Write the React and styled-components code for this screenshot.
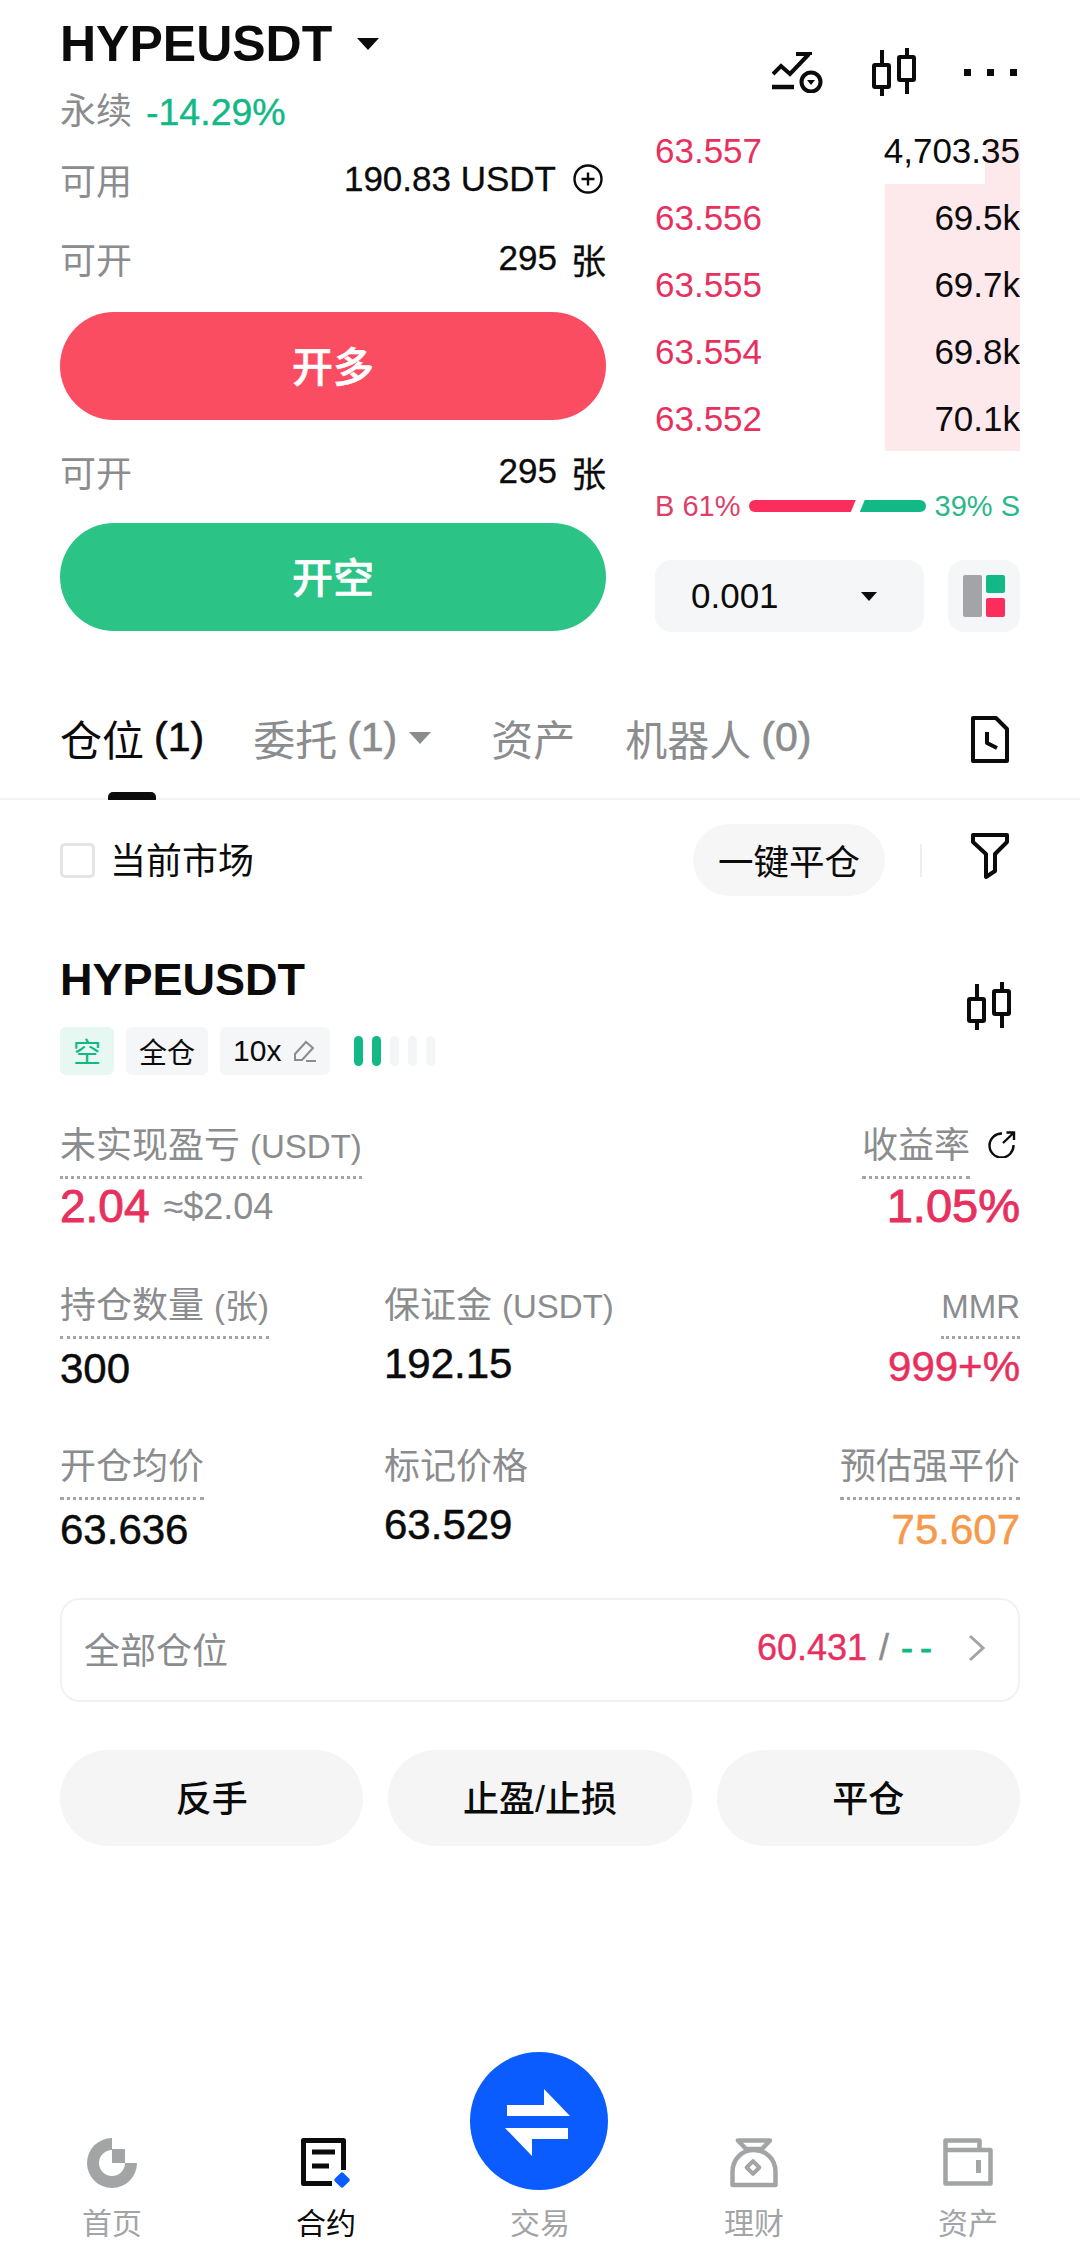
import React from 'react'
import styled, { createGlobalStyle } from 'styled-components'

const RED = '#e8305e'
const GREEN = '#12b886'
const GREY = '#8a8c8e'
const INK = '#0b0b0b'

const GlobalStyle = createGlobalStyle`
    html, body {
        margin: 0;
        background: #fff;
    }
    * {
        box-sizing: border-box;
    }
    body {
        font-family: "Liberation Sans", "Noto Sans CJK SC", sans-serif;
        color: ${INK};
    }
`

const Page = styled.div`
    width: 1080px;
    height: 2248px;
    overflow: hidden;
    display: flex;
    flex-direction: column;
    position: relative;
    background: #fff;
`

const Header = styled.header`
    height: 137px;
    padding: 18px 63px 0 60px;
    display: flex;
    justify-content: space-between;
    flex-shrink: 0;
`

const Symbol = styled.div`
    display: flex;
    align-items: center;
    height: 52px;
    font-size: 50px;
    font-weight: 700;
    gap: 25px;
`

const Caret = styled.i`
    display: block;
    width: 0;
    height: 0;
    border-left: ${p => p.$size}px solid transparent;
    border-right: ${p => p.$size}px solid transparent;
    border-top: ${p => p.$size * 1.15}px solid ${p => p.$color || INK};
`

const SubLine = styled.div`
    display: flex;
    align-items: center;
    gap: 14px;
    margin-top: 17px;
    font-size: 36px;
    line-height: 50px;
    color: ${GREY};
`

const Change = styled.span`
    font-size: 37.5px;
    color: ${GREEN};
    -webkit-text-stroke: 0.4px ${GREEN};
`

const HeaderIcons = styled.div`
    display: flex;
    align-items: center;
    gap: 48px;
    height: 108px;
`

const Dots = styled.div`
    display: flex;
    gap: 16px;
    i {
        display: block;
        width: 7px;
        height: 7px;
        background: ${INK};
    }
`

const Trade = styled.section`
    height: 543px;
    flex-shrink: 0;
    padding: 0 60px;
    display: flex;
    gap: 49px;
`

const Form = styled.div`
    width: 546px;
`

const FormRow = styled.div`
    display: flex;
    justify-content: space-between;
    align-items: center;
    height: 60px;
    margin-top: ${p => p.$top}px;
    padding-bottom: 4px;
    font-size: 35px;
    -webkit-text-stroke: 0.3px ${INK};
`

const FormLabel = styled.span`
    font-size: 36px;
    color: ${GREY};
    -webkit-text-stroke: 0;
`

const FormValue = styled.span`
    display: flex;
    align-items: center;
    gap: ${p => p.$gap}px;
    padding-right: ${p => p.$end || 0}px;
`

const BigButton = styled.button`
    display: block;
    width: 100%;
    height: 108px;
    margin-top: ${p => p.$top}px;
    padding: 0 0 5px;
    border: 0;
    border-radius: 54px;
    background: ${p => p.$color};
    color: #fff;
    font-family: inherit;
    font-size: 41px;
    font-weight: 500;
    -webkit-text-stroke: 0.6px #fff;
`

const Side = styled.div`
    width: 365px;
`

const Book = styled.div`
    height: 314px;
    overflow: hidden;
`

const BookRows = styled.div`
    margin-top: -20px;
`

const BookRow = styled.div`
    position: relative;
    display: flex;
    justify-content: space-between;
    align-items: center;
    height: 67px;
    font-size: 35px;
`

const Depth = styled.div`
    position: absolute;
    top: ${p => p.$top}px;
    right: 0;
    bottom: 0;
    width: ${p => p.$width}px;
    background: #fde8ec;
`

const BookPrice = styled.span`
    position: relative;
    color: ${RED};
`

const BookSize = styled.span`
    position: relative;
`

const Ratio = styled.div`
    display: flex;
    align-items: center;
    justify-content: space-between;
    height: 40px;
    margin-top: 35px;
    font-size: 29px;
`

const RatioText = styled.span`
    color: ${p => p.$color};
    white-space: nowrap;
`

const RatioBars = styled.div`
    display: flex;
    gap: 4px;
    width: 177px;
`

const BuyBar = styled.div`
    height: 12px;
    flex: 108;
    background: #fb2d5c;
    border-radius: 6px 0 0 6px;
    clip-path: polygon(0 0, 100% 0, calc(100% - 5px) 100%, 0 100%);
`

const SellBar = styled.div`
    height: 12px;
    flex: 67;
    background: ${GREEN};
    border-radius: 0 6px 6px 0;
    clip-path: polygon(5px 0, 100% 0, 100% 100%, 0 100%);
`

const Controls = styled.div`
    display: flex;
    gap: 24px;
    margin-top: 34px;
`

const Select = styled.div`
    display: flex;
    align-items: center;
    justify-content: space-between;
    width: 269px;
    height: 72px;
    padding: 0 47px 0 36px;
    border-radius: 16px;
    background: #f4f6f8;
    font-size: 35px;
`

const LayoutButton = styled.div`
    display: grid;
    grid-template-columns: 19px 19px;
    grid-template-rows: 18px 19px;
    gap: 5px 4px;
    align-content: center;
    justify-content: center;
    width: 72px;
    height: 72px;
    border-radius: 16px;
    background: #f4f6f8;
`

const LayoutCell = styled.i`
    display: block;
    border-radius: 2px;
    background: ${p => p.$color};
    grid-row: ${p => (p.$tall ? '1 / 3' : 'auto')};
`

const Tabs = styled.nav`
    height: 120px;
    flex-shrink: 0;
    padding: 0 71px 0 60px;
    display: flex;
    align-items: center;
    border-bottom: 2px solid #f3f3f3;
`

const Tab = styled.div`
    position: relative;
    display: flex;
    align-items: center;
    height: 100%;
    margin-right: ${p => p.$gap}px;
    padding-bottom: 4px;
    font-size: 42px;
    color: ${p => (p.$active ? INK : GREY)};
    white-space: nowrap;
`

const TabCount = styled.span`
    font-size: 41px;
    margin-left: 10px;
    -webkit-text-stroke: 0.6px currentColor;
`

const TabCaret = styled.span`
    margin-left: 12px;
    margin-top: 2px;
`

const TabMark = styled.i`
    position: absolute;
    left: 48px;
    bottom: -2px;
    width: 48px;
    height: 8px;
    border-radius: 5px 5px 0 0;
    background: ${INK};
`

const TabIcon = styled.div`
    margin-left: auto;
    display: flex;
`

const FilterRow = styled.div`
    height: 120px;
    flex-shrink: 0;
    padding: 0 71px 0 60px;
    display: flex;
    align-items: center;
`

const Check = styled.i`
    display: block;
    width: 35px;
    height: 35px;
    border: 3px solid #e2e4e5;
    border-radius: 5px;
    margin-right: 15px;
`

const MarketLabel = styled.span`
    font-size: 36px;
    padding-bottom: 4px;
`

const CloseAll = styled.div`
    display: flex;
    align-items: center;
    justify-content: center;
    width: 192px;
    height: 72px;
    margin-left: auto;
    padding-bottom: 2px;
    border-radius: 36px;
    background: #f6f6f6;
    font-size: 35.5px;
`

const Rule = styled.i`
    display: block;
    width: 2px;
    height: 33px;
    margin: 0 49px 0 35px;
    background: #eeeeee;
`

const FunnelBox = styled.div`
    display: flex;
    margin-bottom: 8px;
`

const Position = styled.section`
    padding: 30px 60px 0;
    flex-shrink: 0;
`

const PositionHead = styled.div`
    display: flex;
    justify-content: space-between;
    align-items: center;
`

const HeadIcon = styled.div`
    display: flex;
    margin: 0 9px 12px 0;
`

const PositionName = styled.h2`
    margin: 0;
    height: 60px;
    line-height: 60px;
    font-size: 45px;
    font-weight: 700;
`

const TagRow = styled.div`
    display: flex;
    align-items: center;
    gap: 12px;
    margin-top: 17px;
`

const Tag = styled.span`
    display: flex;
    align-items: center;
    gap: 12px;
    height: 48px;
    padding: 0 13px;
    border-radius: 6px;
    font-size: ${p => p.$size || 28}px;
    background: ${p => (p.$green ? '#e6f8f1' : '#f4f6f8')};
    color: ${p => (p.$green ? GREEN : INK)};
`

const Risk = styled.div`
    display: flex;
    gap: 9px;
    margin-left: 12px;
`

const RiskBar = styled.i`
    display: block;
    width: 9px;
    height: 30px;
    border-radius: 5px;
    background: ${p => (p.$on ? GREEN : '#f4f5f6')};
`

const Metrics = styled.div`
    display: grid;
    grid-template-columns: ${p => p.$columns || '324px 1fr auto'};
    margin-top: ${p => p.$top}px;
`

const Metric = styled.div`
    display: flex;
    flex-direction: column;
    align-items: ${p => (p.$right ? 'flex-end' : 'flex-start')};
`

const LabelLine = styled.div`
    display: flex;
    align-items: flex-start;
    gap: 18px;
    padding-right: 4px;
`

const ShareBox = styled.div`
    display: flex;
    margin-top: 6px;
`

const Label = styled.span`
    display: block;
    height: 55px;
    line-height: 44px;
    padding-bottom: 8px;
    border-bottom: 3px ${p => (p.$plain ? 'solid transparent' : 'dotted #a3a5a7')};
    font-size: 36px;
    color: ${GREY};
    white-space: nowrap;
`

const LabelUnit = styled.span`
    font-size: 33px;
`

const Value = styled.div`
    height: 50px;
    line-height: 50px;
    margin-top: ${p => p.$top}px;
    font-size: ${p => p.$size || 42}px;
    color: ${p => p.$color || INK};
    -webkit-text-stroke: ${p => (p.$size ? 0.9 : 0.5)}px ${p => p.$color || INK};
    white-space: nowrap;
`

const ValueLine = styled.div`
    display: flex;
    align-items: center;
    gap: 14px;
`

const Approx = styled.span`
    margin-top: 3px;
    font-size: 36px;
    color: ${GREY};
`

const Total = styled.div`
    display: flex;
    align-items: center;
    height: 104px;
    margin-top: 43px;
    padding: 0 32px 4px 22px;
    border: 2px solid #f1f2f3;
    border-radius: 20px;
    font-size: 36px;
    color: ${GREY};
`

const TotalValue = styled.span`
    margin-left: auto;
    margin-right: 29px;
    font-size: 36px;
    color: ${RED};
    -webkit-text-stroke: 0.4px ${RED};
`

const Slash = styled.span`
    color: ${GREY};
    margin: 0 12px;
    -webkit-text-stroke: 0.4px ${GREY};
`

const Dash = styled.span`
    color: ${GREEN};
    letter-spacing: 7px;
    -webkit-text-stroke: 0.8px ${GREEN};
`

const Actions = styled.div`
    display: flex;
    gap: 25px;
    margin-top: 48px;
`

const Action = styled.button`
    flex: 1;
    height: 96px;
    padding: 0 0 5px;
    border: 0;
    border-radius: 48px;
    background: #f5f5f5;
    color: ${INK};
    font-family: inherit;
    font-size: 36px;
    font-weight: 500;
`

const TabBar = styled.footer`
    margin-top: auto;
    height: 110px;
    padding: 0 5px;
    display: grid;
    grid-template-columns: repeat(5, 1fr);
`

const TabItem = styled.div`
    display: flex;
    flex-direction: column;
    align-items: center;
    font-size: 30px;
    color: ${p => (p.$active ? INK : '#a2a4a6')};
`

const TabGlyph = styled.div`
    height: 54px;
    display: flex;
    align-items: flex-start;
`

const TabText = styled.span`
    margin-top: 12px;
    line-height: 40px;
`

const SwapButton = styled.div`
    position: absolute;
    left: 470px;
    top: 2052px;
    width: 138px;
    height: 138px;
    border-radius: 50%;
    background: #0a5cff;
    display: flex;
    align-items: center;
    justify-content: center;
`

const ChartIcon = () => (
    <svg width="52" height="42" viewBox="0 0 52 42" fill="none" stroke={INK} strokeWidth="4">
        <path d="M1 23L9 15L18 23L37 3M24 3H38V4" />
        <path d="M0 36H22" strokeWidth="4.5" />
        <circle cx="39" cy="31" r="9.5" />
        <path d="M35 29H43L39 34Z" fill={INK} stroke="none" />
    </svg>
)

const CandleIcon = () => (
    <svg width="44" height="49" viewBox="0 0 44 49" fill="none" stroke={INK} strokeWidth="4" strokeLinejoin="round">
        <rect x="2" y="17" width="15" height="22" rx="1" />
        <path d="M10 2V17M10 39V48" />
        <rect x="27" y="9" width="15" height="23" rx="1" />
        <path d="M35 0V9M35 32V46" />
    </svg>
)

const PlusCircle = () => (
    <svg width="30" height="30" viewBox="0 0 30 30" fill="none" stroke={INK} strokeWidth="2.4">
        <circle cx="15" cy="15" r="13.5" />
        <path d="M8.5 15H21.5M15 8.5V21.5" />
    </svg>
)

const ClockDoc = () => (
    <svg width="38" height="47" viewBox="0 0 38 47" fill="none" stroke={INK} strokeWidth="4" strokeLinejoin="round">
        <path d="M2 2H25L36 13V45H2Z" />
        <path d="M16 16V27L26 32" />
    </svg>
)

const Funnel = () => (
    <svg width="38" height="47" viewBox="0 0 38 47" fill="none" stroke={INK} strokeWidth="4" strokeLinejoin="round">
        <path d="M2 2H36V9L24 21V38L15 44V21L2 9Z" />
    </svg>
)

const Pencil = () => (
    <svg width="24" height="24" viewBox="0 0 24 24" fill="none" stroke={GREY} strokeWidth="2">
        <path d="M2 21L2 15L13 3L20 9L9 21Z" />
        <path d="M13 22H23" />
    </svg>
)

const ShareIcon = () => (
    <svg width="28" height="28" viewBox="0 0 28 28" fill="none" stroke={INK} strokeWidth="2.4">
        <path d="M14 3.5A12 12 0 1 0 25.5 15" />
        <path d="M15 13L26 2.5M18.5 2.5H26V10" />
    </svg>
)

const Chevron = () => (
    <svg width="18" height="28" viewBox="0 0 18 28" fill="none" stroke="#a2a4a6" strokeWidth="3">
        <path d="M2 2L15 14L2 26" />
    </svg>
)

const HomeIcon = () => (
    <svg width="50" height="50" viewBox="0 0 50 50" fill="#a2a4a6">
        <path d="M25 0A25 25 0 1 0 50 25H38A13 13 0 1 1 25 12Z" />
        <rect x="25" y="11" width="13" height="14" />
    </svg>
)

const ContractIcon = () => (
    <svg width="50" height="50" viewBox="0 0 50 50" fill="none" stroke={INK} strokeWidth="5">
        <path d="M31 45.5H2.5V2.5H42.5V32" strokeLinejoin="round" />
        <path d="M11 14H34M11 28H28" />
        <rect x="35" y="36" width="12" height="12" rx="2" fill="#0a5cff" stroke="none" transform="rotate(45 41 42)" />
    </svg>
)

const EarnIcon = () => (
    <svg width="48" height="50" viewBox="0 0 48 50" fill="none" stroke="#a2a4a6" strokeWidth="4.5" strokeLinejoin="round">
        <path d="M8 2.5H40L32 11H16Z" />
        <path d="M2.5 47V34C2.5 21 12 12 24 12C36 12 45.5 21 45.5 34V47Z" />
        <rect x="18.5" y="25" width="9" height="9" strokeWidth="4" transform="rotate(45 23 29.5)" />
    </svg>
)

const AssetIcon = () => (
    <svg width="50" height="50" viewBox="0 0 50 50" fill="none" stroke="#a2a4a6" strokeWidth="4.5" strokeLinejoin="round">
        <path d="M2.5 2.5H36.5V12H47.5V45.5H2.5Z" />
        <path d="M2.5 12H36.5" />
        <path d="M35.5 22V35" strokeWidth="5" />
    </svg>
)

const SwapIcon = () => (
    <svg width="120" height="120" viewBox="0 0 120 120" fill="#fff" strokeLinejoin="round">
        <path d="M28 44H65V28L91 55H28Z" />
        <path d="M26 67H89V78H53V95Z" />
    </svg>
)

const asks = [
    { price: '63.557', size: '4,703.35', width: 35, top: 23 },
    { price: '63.556', size: '69.5k', width: 135, top: 0 },
    { price: '63.555', size: '69.7k', width: 135, top: 0 },
    { price: '63.554', size: '69.8k', width: 135, top: 0 },
    { price: '63.552', size: '70.1k', width: 135, top: 0 },
]

const App = () => {
    return (
        <Page>
            <GlobalStyle />
            <Header>
                <div>
                    <Symbol>
                        HYPEUSDT
                        <Caret $size={11} />
                    </Symbol>
                    <SubLine>
                        永续 <Change>-14.29%</Change>
                    </SubLine>
                </div>
                <HeaderIcons>
                    <ChartIcon />
                    <CandleIcon />
                    <Dots><i /><i /><i /></Dots>
                </HeaderIcons>
            </Header>

            <Trade>
                <Form>
                    <FormRow $top={14}>
                        <FormLabel>可用</FormLabel>
                        <FormValue $gap={17} $end={3}>190.83 USDT <PlusCircle /></FormValue>
                    </FormRow>
                    <FormRow $top={19}>
                        <FormLabel>可开</FormLabel>
                        <FormValue $gap={14}>295 <span>张</span></FormValue>
                    </FormRow>
                    <BigButton $top={22} $color="#fb4d62">开多</BigButton>
                    <FormRow $top={23}>
                        <FormLabel>可开</FormLabel>
                        <FormValue $gap={14}>295 <span>张</span></FormValue>
                    </FormRow>
                    <BigButton $top={20} $color="#2cc486">开空</BigButton>
                </Form>
                <Side>
                    <Book>
                        <BookRows>
                            {asks.map(row => (
                                <BookRow key={row.price}>
                                    <Depth $top={row.top} $width={row.width} />
                                    <BookPrice>{row.price}</BookPrice>
                                    <BookSize>{row.size}</BookSize>
                                </BookRow>
                            ))}
                        </BookRows>
                    </Book>
                    <Ratio>
                        <RatioText $color="#dc4068">B 61%</RatioText>
                        <RatioBars>
                            <BuyBar />
                            <SellBar />
                        </RatioBars>
                        <RatioText $color="#2bb78b">39% S</RatioText>
                    </Ratio>
                    <Controls>
                        <Select>
                            0.001
                            <Caret $size={8} />
                        </Select>
                        <LayoutButton>
                            <LayoutCell $tall $color="#a2a4a7" />
                            <LayoutCell $color={GREEN} />
                            <LayoutCell $color="#fb2d5c" />
                        </LayoutButton>
                    </Controls>
                </Side>
            </Trade>

            <Tabs>
                <Tab $active $gap={49}>
                    仓位<TabCount>(1)</TabCount>
                    <TabMark />
                </Tab>
                <Tab $gap={60}>
                    委托<TabCount>(1)</TabCount>
                    <TabCaret><Caret $size={11} $color={GREY} /></TabCaret>
                </Tab>
                <Tab $gap={50}>资产</Tab>
                <Tab $gap={0}>
                    机器人<TabCount>(0)</TabCount>
                </Tab>
                <TabIcon><ClockDoc /></TabIcon>
            </Tabs>

            <FilterRow>
                <Check />
                <MarketLabel>当前市场</MarketLabel>
                <CloseAll>一键平仓</CloseAll>
                <Rule />
                <FunnelBox><Funnel /></FunnelBox>
            </FilterRow>

            <Position>
                <PositionHead>
                    <div>
                        <PositionName>HYPEUSDT</PositionName>
                        <TagRow>
                            <Tag $green>空</Tag>
                            <Tag>全仓</Tag>
                            <Tag $size={30}>10x <Pencil /></Tag>
                            <Risk>
                                <RiskBar $on />
                                <RiskBar $on />
                                <RiskBar />
                                <RiskBar />
                                <RiskBar />
                            </Risk>
                        </TagRow>
                    </div>
                    <HeadIcon><CandleIcon /></HeadIcon>
                </PositionHead>

                <Metrics $top={49} $columns="1fr auto">
                    <Metric>
                        <Label>未实现盈亏 <LabelUnit>(USDT)</LabelUnit></Label>
                        <ValueLine>
                            <Value $top={2} $size={46} $color={RED}>2.04</Value>
                            <Approx>≈$2.04</Approx>
                        </ValueLine>
                    </Metric>
                    <Metric $right>
                        <LabelLine>
                            <Label>收益率</Label>
                            <ShareBox><ShareIcon /></ShareBox>
                        </LabelLine>
                        <Value $top={2} $size={47} $color={RED}>1.05%</Value>
                    </Metric>
                </Metrics>

                <Metrics $top={53}>
                    <Metric>
                        <Label>持仓数量 <LabelUnit>(张)</LabelUnit></Label>
                        <Value $top={5}>300</Value>
                    </Metric>
                    <Metric>
                        <Label $plain>保证金 <LabelUnit>(USDT)</LabelUnit></Label>
                        <Value $top={0}>192.15</Value>
                    </Metric>
                    <Metric $right>
                        <Label><LabelUnit>MMR</LabelUnit></Label>
                        <Value $top={3} $color={RED}>999+%</Value>
                    </Metric>
                </Metrics>

                <Metrics $top={51}>
                    <Metric>
                        <Label>开仓均价</Label>
                        <Value $top={5}>63.636</Value>
                    </Metric>
                    <Metric>
                        <Label $plain>标记价格</Label>
                        <Value $top={0}>63.529</Value>
                    </Metric>
                    <Metric $right>
                        <Label>预估强平价</Label>
                        <Value $top={5} $color="#f59a4a">75.607</Value>
                    </Metric>
                </Metrics>

                <Total>
                    全部仓位
                    <TotalValue>60.431<Slash>/</Slash><Dash>--</Dash></TotalValue>
                    <Chevron />
                </Total>

                <Actions>
                    <Action>反手</Action>
                    <Action>止盈/止损</Action>
                    <Action>平仓</Action>
                </Actions>
            </Position>

            <TabBar>
                <TabItem>
                    <TabGlyph><HomeIcon /></TabGlyph>
                    <TabText>首页</TabText>
                </TabItem>
                <TabItem $active>
                    <TabGlyph><ContractIcon /></TabGlyph>
                    <TabText>合约</TabText>
                </TabItem>
                <TabItem>
                    <TabGlyph />
                    <TabText>交易</TabText>
                </TabItem>
                <TabItem>
                    <TabGlyph><EarnIcon /></TabGlyph>
                    <TabText>理财</TabText>
                </TabItem>
                <TabItem>
                    <TabGlyph><AssetIcon /></TabGlyph>
                    <TabText>资产</TabText>
                </TabItem>
            </TabBar>
            <SwapButton><SwapIcon /></SwapButton>
        </Page>
    )
}

export default App
